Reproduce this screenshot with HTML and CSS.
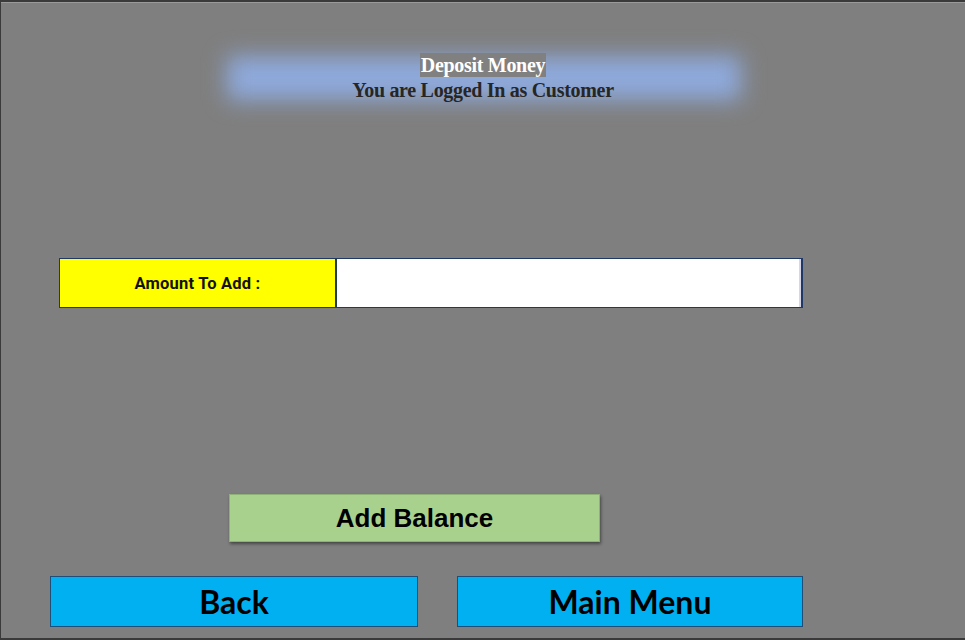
FILE: index.html
```html
<!DOCTYPE html>
<html>
<head>
<meta charset="utf-8">
<link rel="stylesheet" href="styles.css">
</head>
<body>
<div class="screen">
  <header class="banner">
    <div class="banner-glow"></div>
    <div class="title"><span class="title-hl">Deposit Money</span></div>
    <div class="subtitle">You are Logged In as Customer</div>
  </header>
  <div class="field-row">
    <div class="field-label">Amount To Add :</div>
    <div class="field-input"></div>
  </div>
  <div class="add-row">
    <button class="add-btn">Add Balance</button>
  </div>
  <div class="nav-row">
    <button class="nav-btn back">Back</button>
    <button class="nav-btn menu">Main Menu</button>
  </div>
</div>
</body>
</html>
```
FILE: styles.css
```css
html, body {
  margin: 0;
  padding: 0;
  background: #7f7f7f;
}
.screen {
  width: 965px;
  height: 640px;
  box-sizing: border-box;
  background: #7f7f7f;
  border-top: 2px solid #3a3a3a;
  border-left: 1px solid #3a3a3a;
  border-bottom: 2px solid #3a3a3a;
  box-shadow: inset 0 1px 0 #9a9a9a;
  display: flex;
  flex-direction: column;
  overflow: hidden;
}
.banner {
  position: relative;
  margin: 51px 0 0 0;
  height: 50px;
  display: flex;
  flex-direction: column;
  align-items: center;
  font-family: "Liberation Serif", serif;
  font-weight: bold;
  font-size: 20px;
  letter-spacing: -0.3px;
  line-height: 24px;
}
.banner-glow {
  position: absolute;
  left: 226px;
  top: 3px;
  width: 514px;
  height: 44px;
  background: #8ea9db;
  filter: blur(11px);
}
.title, .subtitle {
  position: relative;
}
.title-hl {
  background: #808080;
  color: #ffffff;
  padding: 1px 1px;
}
.subtitle {
  color: #262626;
  margin-top: 1px;
}
.field-row {
  display: flex;
  margin: 155px 0 0 58px;
  height: 50px;
}
.field-label {
  width: 277px;
  box-sizing: border-box;
  background: #ffff00;
  border: 1px solid #1f3864;
  display: flex;
  align-items: center;
  justify-content: center;
  font-family: "Roboto", sans-serif;
  font-weight: bold;
  font-size: 16.5px;
  color: #111;
  letter-spacing: 0.2px;
}
.field-input {
  width: 467px;
  box-sizing: border-box;
  background: #ffffff;
  border: 1px solid #1f3864;
  border-right: 2px solid #1f3864;
  box-shadow: inset -2px 0 0 #d6d6e8;
}
.add-row {
  margin: 186px 0 0 228px;
}
.add-btn {
  width: 371px;
  height: 48px;
  background: #a9d18e;
  border: 1px solid #8fb178;
  box-shadow: 1px 2px 3px rgba(0,0,0,0.45);
  font-family: "Liberation Sans", Arial, sans-serif;
  font-weight: bold;
  font-size: 26px;
  color: #000;
  padding: 0;
  display: block;
}
.nav-row {
  display: flex;
  margin: 34px 0 0 49px;
  gap: 39px;
}
.nav-btn {
  height: 51px;
  background: #00b0f0;
  border: 1px solid #1f4e79;
  font-family: "Lato", sans-serif;
  font-weight: bold;
  font-size: 32px;
  color: #000;
  padding: 0;
  display: block;
}
.nav-btn.back {
  width: 368px;
}
.nav-btn.menu {
  width: 346px;
}
```
